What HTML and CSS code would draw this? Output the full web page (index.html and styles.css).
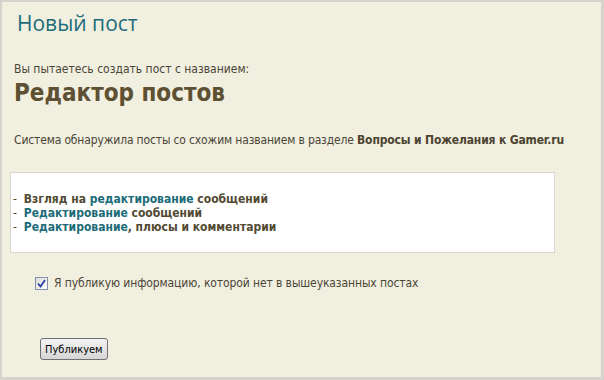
FILE: index.html
```html
<!DOCTYPE html>
<html lang="ru">
<head>
  <meta charset="UTF-8">
  <title>Новый пост</title>
  <link rel="stylesheet" href="styles.css">
</head>
<body>
  <div class="frame">
    <h1>Новый пост</h1>

    <div class="intro">Вы пытаетесь создать пост с названием:</div>
    <div class="post-title">Редактор постов</div>

    <p class="notice">Система обнаружила посты со схожим названием в разделе <b>Вопросы и Пожелания к Gamer.ru</b></p>

    <div class="similar">
      - &nbsp;<b>Взгляд на <a href="#">редактирование</a> сообщений</b><br>
      - &nbsp;<b><a href="#">Редактирование</a> сообщений</b><br>
      - &nbsp;<b><a href="#">Редактирование</a>, плюсы и комментарии</b>
    </div>

    <label class="confirm">
      <span class="checkbox">
        <svg width="9" height="9" viewBox="0 0 9 9"><path d="M1 4.5 L3.5 7.5 L8 1" fill="none" stroke="#2a3fa8" stroke-width="1.8"/></svg>
      </span>
      Я публикую информацию, которой нет в вышеуказанных постах
    </label>

    <button class="publish">Публикуем</button>
  </div>
</body>
</html>
```

FILE: styles.css
```css
html, body {
  margin: 0;
  padding: 0;
}
body {
  background-color: #d6d3cc;
  font-family: "DejaVu Sans Condensed", "DejaVu Sans", sans-serif;
  font-size: 12px;
  color: #4a4636;
}
.frame {
  margin: 2px 3px 3px 2px;
  height: 375px;
  box-sizing: border-box;
  background-color: #f1efe0;
  padding: 8px 8px 0 12px;
}
h1 {
  font-family: "Open Sans", sans-serif;
  font-weight: normal;
  font-size: 21px;
  color: #1c6b78;
  margin: 0 0 0 3px;
  line-height: 26px;
}
.intro {
  margin-top: 25px;
  line-height: 16px;
}
.post-title {
  font-size: 24px;
  font-weight: bold;
  color: #5e5033;
  line-height: 30px;
  margin-top: 1px;
}
.notice {
  margin: 24px 0 0;
  line-height: 16px;
  letter-spacing: -0.15px;
}
.notice b {
  color: #4c4430;
}
.similar {
  margin: 24px 38px 0 -4px;
  background-color: #fff;
  border: 1px solid #d9d8d0;
  padding: 19px 0 18px 2px;
  line-height: 14px;
  color: #4a4636;
}
.similar b {
  color: #524a33;
}
.similar a {
  color: #1c6b78;
  text-decoration: none;
}
.confirm {
  display: flex;
  align-items: center;
  gap: 6px;
  margin: 23px 0 0 21px;
  letter-spacing: -0.1px;
}
.checkbox {
  display: flex;
  align-items: center;
  justify-content: center;
  width: 11px;
  height: 11px;
  border: 1px solid #8193a8;
  background: linear-gradient(135deg, #dcdcd6, #ffffff);
}
.publish {
  display: block;
  margin: 48px 0 0 26px;
  font-family: "DejaVu Sans Condensed", sans-serif;
  font-size: 11px;
  height: 22px;
  padding: 0 4px;
  border: 1px solid #707070;
  border-radius: 3px;
  background: linear-gradient(#f4f4f4, #d6d6d6);
  color: #000;
}
```
